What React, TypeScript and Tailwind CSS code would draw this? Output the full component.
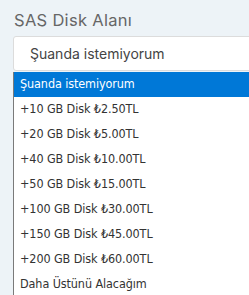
import React from "react";

const options = [
  "Şuanda istemiyorum",
  "+10 GB Disk ₺2.50TL",
  "+20 GB Disk ₺5.00TL",
  "+40 GB Disk ₺10.00TL",
  "+50 GB Disk ₺15.00TL",
  "+100 GB Disk ₺30.00TL",
  "+150 GB Disk ₺45.00TL",
  "+200 GB Disk ₺60.00TL",
  "Daha Üstünü Alacağım",
];

export default function App() {
  return (
    <div className="w-[249px] h-[295px] overflow-hidden bg-[#edf3f7]">
      <div className="pl-[13px] pt-[10px] w-[280px]">
        <label className="block pl-[1px] text-[16.5px] leading-[20px] text-[#666] font-['Inter',sans-serif] tracking-[0.3px]">
          SAS Disk Alanı
        </label>
        <div className="mt-[6px] flex h-[35px] rounded-[3px] border border-[#dcdcdc] bg-white">
          <div className="flex flex-1 items-center pl-[16px] text-[14px] text-[#444] font-['Inter',sans-serif]">
            Şuanda istemiyorum
          </div>
          <div className="flex w-[30px] items-center justify-start pl-[4px] border border-[#0078d7] bg-[#e5f1fb] -my-px">
            <svg width="8" height="5" viewBox="0 0 8 5" className="ml-px">
              <path d="M0.5 0.5 L4 4 L7.5 0.5" fill="none" stroke="#333" strokeWidth="1.2" />
            </svg>
          </div>
        </div>
        <ul className="mt-[1px] border-l border-[#7a7a7a] bg-white font-['DejaVu_Sans_Condensed','DejaVu_Sans',sans-serif] text-[12.5px] tracking-[-0.1px]">
          {options.map((o, i) => (
            <li
              key={o}
              className={
                i === 0
                  ? "flex h-[25px] items-center pl-[6px] bg-[#0078d7] text-white"
                  : "flex h-[25px] items-center pl-[6px] text-[#333]"
              }
            >
              {o}
            </li>
          ))}
        </ul>
      </div>
    </div>
  );
}
